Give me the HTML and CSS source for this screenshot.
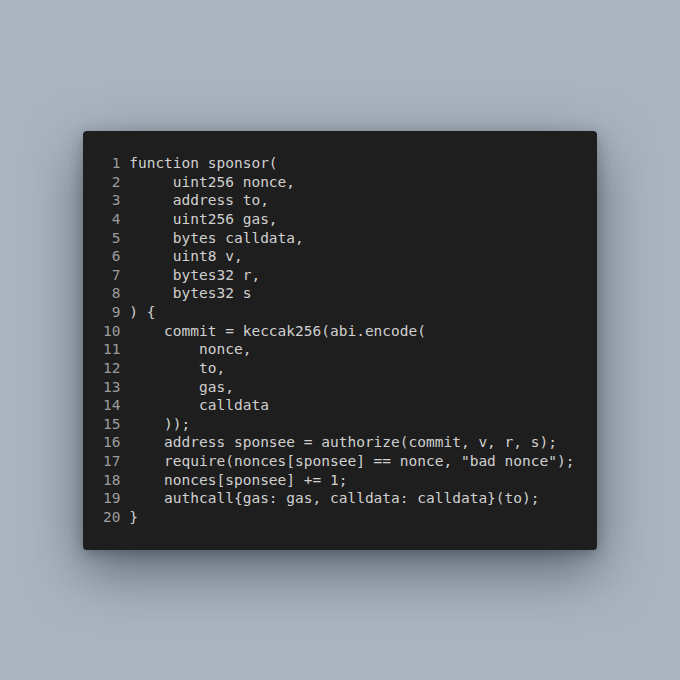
FILE: index.html
```html
<!DOCTYPE html>
<html>
<head>
<meta charset="utf-8">
<link rel="stylesheet" href="styles.css">
</head>
<body>
<div class="stage">
  <div class="panel">
    <div class="code">
      <div class="line"><span class="ln"> 1</span><span class="src">function sponsor(</span></div>
      <div class="line"><span class="ln"> 2</span><span class="src">     uint256 nonce,</span></div>
      <div class="line"><span class="ln"> 3</span><span class="src">     address to,</span></div>
      <div class="line"><span class="ln"> 4</span><span class="src">     uint256 gas,</span></div>
      <div class="line"><span class="ln"> 5</span><span class="src">     bytes calldata,</span></div>
      <div class="line"><span class="ln"> 6</span><span class="src">     uint8 v,</span></div>
      <div class="line"><span class="ln"> 7</span><span class="src">     bytes32 r,</span></div>
      <div class="line"><span class="ln"> 8</span><span class="src">     bytes32 s</span></div>
      <div class="line"><span class="ln"> 9</span><span class="src">) {</span></div>
      <div class="line"><span class="ln">10</span><span class="src">    commit = keccak256(abi.encode(</span></div>
      <div class="line"><span class="ln">11</span><span class="src">        nonce,</span></div>
      <div class="line"><span class="ln">12</span><span class="src">        to,</span></div>
      <div class="line"><span class="ln">13</span><span class="src">        gas,</span></div>
      <div class="line"><span class="ln">14</span><span class="src">        calldata</span></div>
      <div class="line"><span class="ln">15</span><span class="src">    ));</span></div>
      <div class="line"><span class="ln">16</span><span class="src">    address sponsee = authorize(commit, v, r, s);</span></div>
      <div class="line"><span class="ln">17</span><span class="src">    require(nonces[sponsee] == nonce, "bad nonce");</span></div>
      <div class="line"><span class="ln">18</span><span class="src">    nonces[sponsee] += 1;</span></div>
      <div class="line"><span class="ln">19</span><span class="src">    authcall{gas: gas, calldata: calldata}(to);</span></div>
      <div class="line"><span class="ln">20</span><span class="src">}</span></div>
    </div>
  </div>
</div>
</body>
</html>
```

FILE: styles.css
```css
html, body {
  margin: 0;
  padding: 0;
}
body {
  background: #aab4c0;
  width: 680px;
  height: 680px;
  overflow: hidden;
}
.stage {
  width: 680px;
  height: 680px;
  display: flex;
  align-items: center;
  justify-content: center;
}
.panel {
  box-sizing: border-box;
  width: 514px;
  height: 419px;
  background: #1e1e1e;
  border-radius: 4px;
  padding: 23.5px 0 0 20px;
  box-shadow: 0 20px 55px rgba(30, 38, 48, 0.55), 0 4px 14px rgba(30, 38, 48, 0.3);
}
.code {
  font-family: "DejaVu Sans Mono", monospace;
  font-size: 14.5px;
  line-height: 18.63px;
  color: #d0d0d0;
}
.line {
  display: flex;
  white-space: pre;
}
.ln {
  color: #9c9c9c;
  margin-right: 0.602em;
}
.src {
  white-space: pre;
}
```
